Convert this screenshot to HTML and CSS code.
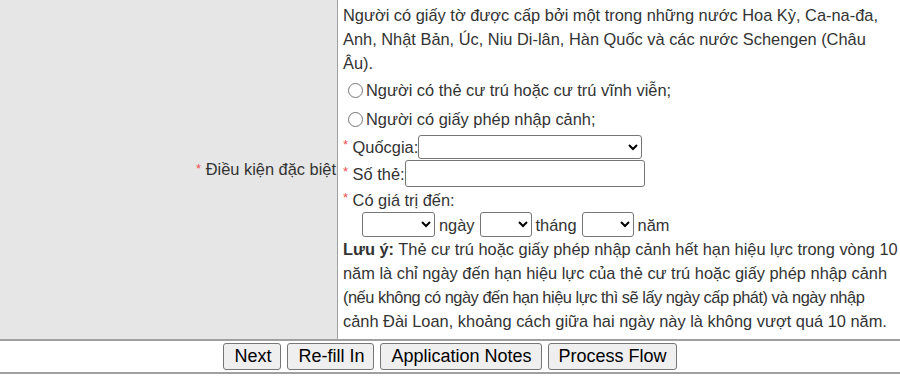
FILE: index.html
```html
<!DOCTYPE html>
<html lang="vi">
<head>
<meta charset="utf-8">
<title>Điều kiện đặc biệt</title>
<link rel="stylesheet" href="styles.css">
</head>
<body>
<div class="form">
  <div class="row">
    <div class="label"><span class="label-text"><span class="req">*</span> Điều kiện đặc biệt</span></div>
    <div class="field">
      <p class="intro">Người có giấy tờ được cấp bởi một trong những nước Hoa Kỳ, Ca-na-đa, Anh, Nhật Bản, Úc, Niu Di-lân, Hàn Quốc và các nước Schengen (Châu Âu).</p>
      <label class="opt"><input type="radio" name="dk"><span>Người có thẻ cư trú hoặc cư trú vĩnh viễn;</span></label>
      <label class="opt"><input type="radio" name="dk"><span>Người có giấy phép nhập cảnh;</span></label>
      <div class="line line-country"><span class="req">*</span><span class="cap">&nbsp;Quốcgia:</span><select class="sel-country"><option></option></select></div>
      <div class="line line-card"><span class="req">*</span><span class="cap">&nbsp;Số thẻ:</span><input class="card" type="text"></div>
      <div class="line line-valid"><span class="req">*</span><span class="cap">&nbsp;Có giá trị đến:</span></div>
      <div class="line line-date">
        <select class="sel-day"><option></option></select><span class="unit">ngày</span>
        <select class="sel-month"><option></option></select><span class="unit">tháng</span>
        <select class="sel-year"><option></option></select><span class="unit">năm</span>
      </div>
      <p class="note"><b>Lưu ý:</b> Thẻ cư trú hoặc giấy phép nhập cảnh hết hạn hiệu lực trong vòng 10<br>năm là chỉ ngày đến hạn hiệu lực của thẻ cư trú hoặc giấy phép nhập cảnh<br><span class="tight">(nếu không có ngày đến hạn hiệu lực thì sẽ lấy ngày cấp phát) và ngày nhập</span><br>cảnh Đài Loan, khoảng cách giữa hai ngày này là không vượt quá 10 năm.</p>
    </div>
  </div>
  <div class="actions">
    <button type="button" class="btn">Next</button>
    <button type="button" class="btn">Re-fill In</button>
    <button type="button" class="btn">Application Notes</button>
    <button type="button" class="btn">Process Flow</button>
  </div>
</div>
</body>
</html>
```

FILE: styles.css
```css
html, body {
  margin: 0;
  padding: 0;
  background: #ffffff;
}

body {
  font-family: "Liberation Sans", Arial, sans-serif;
  font-size: 16.4px;
  color: #333333;
  width: 900px;
  overflow: hidden;
}

.form {
  width: 900px;
}

.row {
  display: grid;
  grid-template-columns: 338px 562px;
  height: 339px;
  border-bottom: 2px solid #a0a0a0;
}

.label {
  background: #e6e6e6;
  border-right: 1px solid #a0a0a0;
  display: flex;
  align-items: center;
  justify-content: flex-end;
  padding-right: 1px;
  line-height: 24px;
}

.req {
  color: #f25050;
  font-size: 13px;
  position: relative;
  top: -2px;
}

.field {
  padding: 3px 1px 0 5px;
  line-height: 24px;
  min-width: 0;
}

.intro,
.note {
  margin: 0;
}

.note {
  white-space: nowrap;
}

.tight {
  letter-spacing: -0.48px;
}

.opt {
  display: flex;
  align-items: center;
  height: 29px;
}

.opt input {
  margin: 1px 3px 0 5px;
  width: 15px;
  height: 15px;
}

.line {
  display: flex;
  align-items: center;
  white-space: nowrap;
}

.line-country { height: 27px; }
.line-card { height: 27px; }
.line-valid { height: 25px; }
.line-date { height: 25px; padding-left: 19px; }

select,
input.card {
  font-family: "Liberation Sans", Arial, sans-serif;
  font-size: 14px;
  margin: 0;
  box-sizing: border-box;
  background: #ffffff;
  border: 1px solid #767676;
  border-radius: 3px;
  color: #000;
}

.sel-country { width: 224px; height: 24px; }
input.card { width: 240px; height: 27px; padding: 1px 2px; }
.sel-day { width: 73px; height: 25px; }
.sel-month { width: 52px; height: 25px; }
.sel-year { width: 52px; height: 25px; }

.unit {
  margin: 0 5px 0 4px;
}

.actions {
  display: flex;
  justify-content: center;
  align-items: flex-start;
  gap: 6px;
  height: 33px;
  box-sizing: border-box;
  padding-top: 2px;
  border-bottom: 2px solid #a0a0a0;
}

.btn {
  font-family: "Liberation Sans", Arial, sans-serif;
  font-size: 18px;
  color: #000;
  background: #efefef;
  border: 1px solid #767676;
  border-radius: 3px;
  height: 27px;
  padding: 0 9px 0 10px;
  line-height: 25px;
  margin: 0;
}
```
